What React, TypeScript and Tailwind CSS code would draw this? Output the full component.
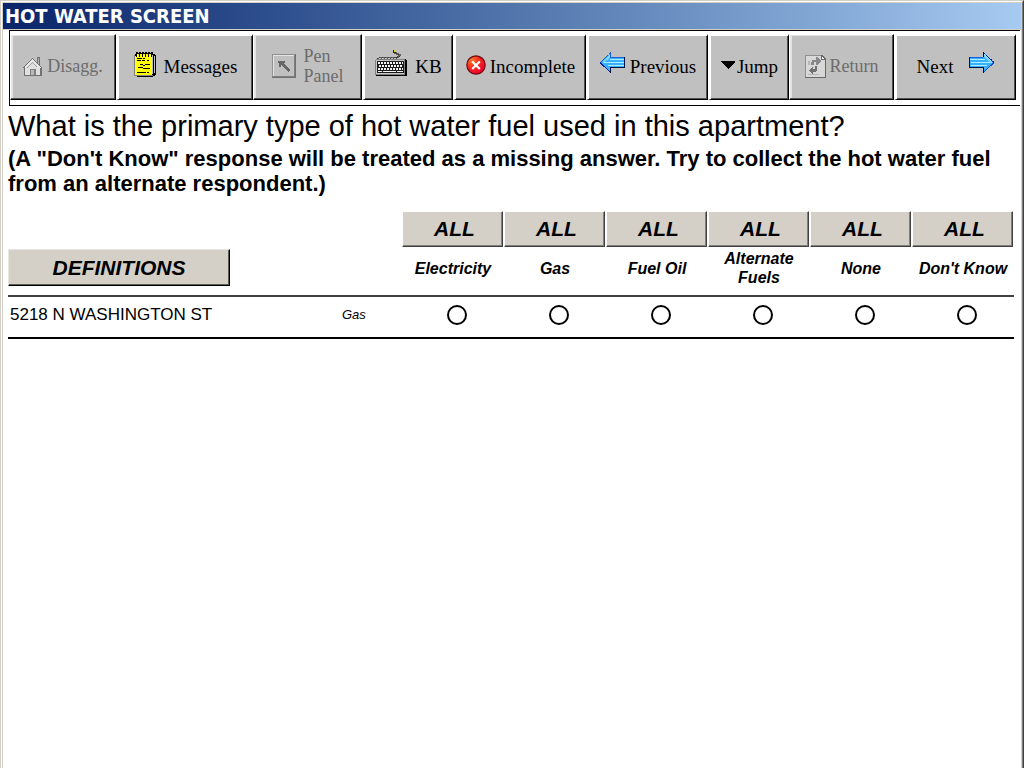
import React, { useState } from "react";

const serif = "font-['Liberation_Serif','Times_New_Roman',serif]";

function HouseIcon() {
  return (
    <svg width="20" height="21" viewBox="0 0 20 21" shapeRendering="crispEdges" aria-hidden="true">
      <path d="M14 1h3v8h-3z" fill="#707070" />
      <path d="M15 2h1v6h-1z" fill="#b0b0b0" />
      <path d="M2 11L9 4l8 7v8H2z" fill="#e0e0e0" />
      <path d="M0 11L9 2l10 9v1l-2 1-8-8-7 8H1z" fill="#707070" />
      <path d="M1 11l8-8 9 8-1 1-8-7-7 7z" fill="#e8e8e8" />
      <path d="M4 12l5-6 5 5v1l-5-5-4 5z" fill="#a0a0a0" />
      <path d="M1 12h1v7H1zM17 12h2v8h-2zM1 19h18v1H1z" fill="#707070" />
      <path d="M7 13h6v6H7z" fill="#808080" />
      <path d="M8 14h3v5H8z" fill="#b8b8b8" />
    </svg>
  );
}

function NotepadIcon() {
  return (
    <svg width="22" height="26" viewBox="0 0 22 26" shapeRendering="crispEdges" aria-hidden="true">
      <path d="M2 1h17v1h2v1h1v20h-1v1h-2v1H3v-1H1V2h1z" fill="#000" />
      <path d="M18 3h1v19h-1zM20 4h1v17h-1z" fill="#c0c0c0" />
      <path d="M1 4h17v19H1z" fill="#ff0" />
      <path d="M0 3h1v21H0zM1 23h18v1H1z" fill="#808080" />
      <path d="M2 0h2v1H2zM5 0h2v1H5zM8 0h2v1H8zM11 0h2v1h-2zM14 0h2v1h-2zM17 0h2v1h-2zM2 2h1v3H2zM5 2h1v3H5zM8 2h1v3H8zM11 2h1v3h-1zM14 2h1v3h-1zM17 2h1v3h-1z" fill="#000" />
      <path d="M3 2h2v2H3zM6 2h2v2H6zM9 2h2v2H9zM12 2h2v2h-2zM15 2h2v2h-2z" fill="#ff0" />
      <path d="M3 6h5v1H3zM9 6h2v1H9zM3 8h4v1H3zM8 8h3v1H8zM13 8h2v1h-2zM6 12h3v1H6zM9 13h2v1H9zM11 12h5v1h-5zM4 15h5v1H4zM9 16h7v1H9zM3 20h9v1H3zM13 20h2v1h-2z" fill="#000" />
    </svg>
  );
}

function PenPanelIcon() {
  return (
    <svg width="24" height="24" viewBox="0 0 24 24" shapeRendering="crispEdges" aria-hidden="true">
      <path d="M0 0h24v24H0z" fill="#707070" />
      <path d="M0 0h23v23H0z" fill="#909090" />
      <path d="M1 1h22v22H1z" fill="#e4e4e4" />
      <path d="M2 2h20v20H2z" fill="#c0c0c0" />
      <path d="M22 1h1v22H1v-1h21z" fill="#808080" />
      <path d="M6 7h7v2h-2l7 7-2 2-7-7v2H7V9H6z" fill="#666" />
    </svg>
  );
}

function KeyboardIcon() {
  const keys = [];
  for (let r = 0; r < 3; r++) {
    for (let c = 0; c < 8; c++) {
      keys.push(
        <rect key={`${r}-${c}`} x={3 + c * 3 + (r === 1 ? 1 : 0)} y={13 + r * 3} width="2" height="2" fill="#f4f4f4" />
      );
    }
  }
  return (
    <svg width="32" height="28" viewBox="0 0 32 28" shapeRendering="crispEdges" aria-hidden="true">
      <path d="M2 9h2v-1h2v1h1v-1h2v1h1v-1h2v1h1v-1h2v1h1v-1h2v1h1v-1h2v1h1v-1h2v-1h1V5h-2V4h-2v-1h-2v1h2v1h2v1h1v1h-2v1h-2M2 9v1" fill="none" stroke="#222" strokeWidth="0.6" />
      <path d="M18 1h3v3h-3z" fill="#222" />
      <path d="M19 1h2v2h-2z" fill="#e0d820" />
      <path d="M1 10h30v1h1v16H1v-1H0V11h1z" fill="#000" />
      <path d="M1 10h29v16H0V11h1z" fill="#808080" />
      <path d="M1 11h28v14H1z" fill="#c8c8c8" />
      <path d="M2 12h27v12H2z" fill="#1a1a1a" />
      {keys}
      <path d="M27 13h1v2h-1zM27 19h1v2h-1zM3 22h4v1H3zM8 22h13v1H8zM22 22h6v1h-6z" fill="#f4f4f4" />
    </svg>
  );
}

function ErrorIcon() {
  return (
    <svg width="20" height="20" viewBox="0 0 20 20" aria-hidden="true">
      <defs>
        <radialGradient id="err" cx="0.28" cy="0.25" r="0.8">
          <stop offset="0" stopColor="#f08030" />
          <stop offset="0.45" stopColor="#f83020" />
          <stop offset="1" stopColor="#f00030" />
        </radialGradient>
      </defs>
      <circle cx="10" cy="10" r="9.2" fill="url(#err)" stroke="#700c10" strokeWidth="1.2" />
      <path d="M6.2 6.5l7.6 7.5M13.8 6.5L6.2 14" stroke="#fff" strokeWidth="2.2" />
    </svg>
  );
}

function ArrowIcon({ right = false }: { right?: boolean }) {
  return (
    <svg width="26" height="22" viewBox="0 0 26 22" shapeRendering="crispEdges" aria-hidden="true">
      {right ? (
        <>
          <path d="M1 5h14V0l10 10.5L15 21v-5H1z" fill="#38b0ff" />
          <path d="M1 7h15v1H1zM2 10h20v1H2zM2 13h16v1H2z" fill="#a8f0ff" />
          <path d="M15 5V2l8 8-1 1-7-6z" fill="#80dcff" />
          <path d="M0 5h14v1H1z" fill="#1860e0" />
          <path d="M0 5h1v11H0zM0 15h15v1H0zM14 15h1v6h-1zM14 0h1v5h-1z" fill="#001040" />
          <path d="M15 20L25 10.5" stroke="#0c50c0" />
          <path d="M15 1l10 9.5" stroke="#0828a0" strokeDasharray="2 1" />
        </>
      ) : (
        <>
          <path d="M25 5H11V0L1 10.5 11 21v-5h14z" fill="#38b0ff" />
          <path d="M10 7h14v1H10zM4 10h20v1H4zM8 13h16v1H8z" fill="#a8f0ff" />
          <path d="M2 10l8-8v4l-7 5z" fill="#80dcff" />
          <path d="M11 5h14v1H11zM10 0h1v6h-1z" fill="#1860e0" />
          <path d="M24 5h1v11h-1zM11 15h14v1H11zM10 15h1v6h-1z" fill="#001040" />
          <path d="M10 20L0 10.5" stroke="#0828a0" />
          <path d="M10 1L1 10" stroke="#1860e0" strokeDasharray="2 1" />
        </>
      )}
    </svg>
  );
}

function TriangleIcon() {
  return (
    <svg width="14" height="8" viewBox="0 0 14 8" shapeRendering="crispEdges" aria-hidden="true">
      <path d="M0 0h14v1L7 8 0 1z" fill="#000" />
    </svg>
  );
}

function ReturnIcon() {
  return (
    <svg width="21" height="23" viewBox="0 0 21 23" shapeRendering="crispEdges" aria-hidden="true">
      <path d="M0 0h17l4 4v19H0z" fill="#909090" />
      <path d="M20 4h1v19H0v-1h20z" fill="#686868" />
      <path d="M1 1h15v4h4v17H1z" fill="#d8d8d8" />
      <path d="M16 0h1l4 4v1h-5z" fill="#686868" />
      <path d="M17 2l2 2h-2z" fill="#f4f4f4" />
      <path d="M3 6h2v4H3zM3 19h11v1H3z" fill="#b8b8b8" />
      <path d="M6 10V7h1V5h4V2h1l4 4-4 4H11V7H9v3z" fill="#888" />
      <path d="M4 15l4-4v3h2v-3h2v5h-1v1H8v2H7z" fill="#707070" />
    </svg>
  );
}

type ToolProps = { children: React.ReactNode; gap: string; disabled?: boolean };

function ToolButton({ children, gap, disabled }: ToolProps) {
  return (
    <button
      type="button"
      disabled={disabled}
      className={`flex h-[66px] min-w-0 items-center justify-center border-b border-r border-b-black border-r-black border-l-white border-t-white bg-[#c0c0c0] pb-0.5 text-left leading-[20px] whitespace-nowrap ${gap} ${
        disabled
          ? "border-l border-t text-[18px] text-[#6c6c6c] shadow-[inset_-1px_-1px_0_#505050,inset_2px_1px_0_#e4e4e4]"
          : "border-l-[3px] border-t-2 text-[19px] text-black shadow-[inset_-1px_-1px_0_#505050]"
      }`}
    >
      {children}
    </button>
  );
}

const fuels = ["Electricity", "Gas", "Fuel Oil", "Alternate Fuels", "None", "Don't Know"];

export default function App() {
  const [choice, setChoice] = useState<string | null>(null);
  return (
    <div className="flex min-h-screen flex-col border-l border-r border-t border-l-[#d4d0c8] border-r-[#404040] border-t-[#d4d0c8] bg-white font-['Liberation_Sans',Arial,sans-serif] text-black">
      <div className="flex grow flex-col border-l border-r border-t border-l-white border-r-[#808080] border-t-white">
        <div className="flex grow flex-col border-l border-r border-t border-[#d4d0c8]">
          <header className="h-[27px] border-b border-[#d4d0c8] bg-linear-to-r from-[#0a246a] to-[#a6caf0] pl-[2px]">
            <h1 className="font-['DejaVu_Sans_Condensed','DejaVu_Sans',sans-serif] text-[20px] leading-[26px] font-bold text-white">HOT WATER SCREEN</h1>
          </header>

          <nav aria-label="Toolbar" className={`ml-[6px] mr-[1px] border-b border-l border-t border-black pt-[3px] pr-[4px] pb-[5px] ${serif}`}>
            <div className="grid grid-cols-[106fr_137fr_109fr_91fr_133fr_122fr_81fr_105fr_122fr]">
              <ToolButton gap="gap-1" disabled>
                <HouseIcon />
                Disagg.
              </ToolButton>
              <ToolButton gap="gap-2">
                <span className="mb-1"><NotepadIcon /></span>
                Messages
              </ToolButton>
              <ToolButton gap="gap-2" disabled>
                <PenPanelIcon />
                <span>
                  Pen
                  <br />
                  Panel
                </span>
              </ToolButton>
              <ToolButton gap="gap-2">
                <span className="mb-2"><KeyboardIcon /></span>
                KB
              </ToolButton>
              <ToolButton gap="gap-1">
                <span className="mb-1"><ErrorIcon /></span>
                Incomplete
              </ToolButton>
              <ToolButton gap="gap-1">
                <span className="mb-2"><ArrowIcon /></span>
                Previous
              </ToolButton>
              <ToolButton gap="gap-0.5">
                <span className="mb-1"><TriangleIcon /></span>
                Jump
              </ToolButton>
              <ToolButton gap="gap-1" disabled>
                <ReturnIcon />
                Return
              </ToolButton>
              <ToolButton gap="gap-4">
                Next
                <span className="mb-2"><ArrowIcon right /></span>
              </ToolButton>
            </div>
          </nav>

          <main className="pr-[7px] pl-[5px]">
            <h2 className="pt-1 text-[29px] leading-[32px]">What is the primary type of hot water fuel used in this apartment?</h2>
            <p className="pt-1 text-[22px] leading-[25px] font-bold">
              (A "Don't Know" response will be treated as a missing answer. Try to collect the hot water fuel from an alternate respondent.)
            </p>

            <table className="mt-[15px] w-full table-fixed border-collapse">
              <colgroup>
                <col className="w-[30%]" />
                <col />
                {fuels.map((f) => (
                  <col key={f} className="w-[10.14%]" />
                ))}
              </colgroup>
              <thead>
                <tr>
                  <td colSpan={2} rowSpan={2} className="p-0 pb-[9px] align-bottom">
                    <button
                      type="button"
                      className="block h-[37px] w-[222px] border-b border-l border-r border-t border-b-black border-l-[#e8e6e0] border-r-black border-t-[#e8e6e0] bg-[#d4d0c8] text-[21px] leading-[34px] font-bold italic shadow-[inset_-1px_-1px_0_#605c50]"
                    >
                      DEFINITIONS
                    </button>
                  </td>
                  {fuels.map((f) => (
                    <td key={f} className="p-0 pr-px">
                      <button
                        type="button"
                        aria-label={`ALL ${f}`}
                        onClick={() => setChoice(f)}
                        className="block h-[36px] w-full border-b border-l border-r border-t border-b-[#404040] border-l-white border-r-[#404040] border-t-white bg-[#d4d0c8] pl-1 text-[21px] leading-[34px] font-bold italic shadow-[inset_-1px_-1px_0_#808080]"
                      >
                        ALL
                      </button>
                    </td>
                  ))}
                </tr>
                <tr>
                  {fuels.map((f) => (
                    <th key={f} scope="col" className="h-[49px] p-0 pb-1.5 text-[16px] leading-[19px] font-bold italic">
                      {f}
                    </th>
                  ))}
                </tr>
              </thead>
              <tbody>
                <tr className="h-[42px] border-t-2 border-b-2 border-t-[#404040] border-b-black">
                  <th scope="row" className="p-0 pb-1 pl-0.5 text-left text-[17px] font-normal">5218 N WASHINGTON ST</th>
                  <td className="p-0 pr-1 pb-1 text-center text-[13px] italic">Gas</td>
                  {fuels.map((f) => (
                    <td key={f} className="p-0 pb-1 pl-2">
                      <input
                        type="radio"
                        name="fuel"
                        aria-label={f}
                        checked={choice === f}
                        onChange={() => setChoice(f)}
                        className="mx-auto block size-5 appearance-none rounded-full border-2 border-black bg-white checked:bg-black checked:shadow-[inset_0_0_0_3px_white]"
                      />
                    </td>
                  ))}
                </tr>
              </tbody>
            </table>
          </main>
        </div>
      </div>
    </div>
  );
}
